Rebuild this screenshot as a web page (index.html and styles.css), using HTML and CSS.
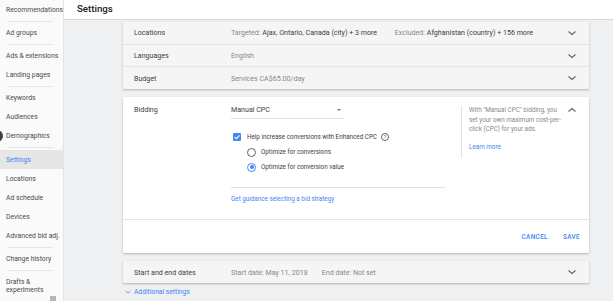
FILE: index.html
```html
<!DOCTYPE html>
<html lang="en">
<head>
    <meta charset="UTF-8">
    <title>Settings</title>
    <link rel="stylesheet" href="styles.css">
</head>
<body>
    <div class="sidebar">
        <div class="navItem">Recommendations</div>
        <div class="navLine"></div>
        <div class="navItem">Ad groups</div>
        <div class="navLine"></div>
        <div class="navItem">Ads &amp; extensions</div>
        <div class="navItem">Landing pages</div>
        <div class="navLine"></div>
        <div class="navItem">Keywords</div>
        <div class="navItem">Audiences</div>
        <div class="navItem">Demographics</div>
        <div class="navLine"></div>
        <div class="navItem active">Settings</div>
        <div class="navItem">Locations</div>
        <div class="navItem">Ad schedule</div>
        <div class="navItem">Devices</div>
        <div class="navItem">Advanced bid adj.</div>
        <div class="navLine"></div>
        <div class="navItem">Change history</div>
        <div class="navLine"></div>
        <div class="navItem">Drafts &amp;<br>experiments</div>
        <div class="scrollThumb"></div>
    </div>
    <div class="fab"></div>
    <div class="main">
        <div class="header">Settings</div>
        <div class="content">
            <div class="card collapsed">
                <div class="row">
                    <div class="label">Locations</div>
                    <div class="value">
                        <span class="targeted"><span class="muted">Targeted:</span> Ajax, Ontario, Canada (city) + 3 more</span>
                        <span><span class="muted">Excluded:</span> Afghanistan (country) + 156 more</span>
                    </div>
                    <svg class="chev" viewBox="0 0 12 8"><path d="M2.5 2.5 L6 5.5 L9.5 2.5"/></svg>
                </div>
                <div class="row">
                    <div class="label">Languages</div>
                    <div class="value muted">English</div>
                    <svg class="chev" viewBox="0 0 12 8"><path d="M2.5 2.5 L6 5.5 L9.5 2.5"/></svg>
                </div>
                <div class="row">
                    <div class="label">Budget</div>
                    <div class="value muted">Services CA$65.00/day</div>
                    <svg class="chev" viewBox="0 0 12 8"><path d="M2.5 2.5 L6 5.5 L9.5 2.5"/></svg>
                </div>
            </div>

            <div class="card open">
                <div class="bidBody">
                    <div class="label bidLabel">Bidding</div>
                    <div class="bidMain">
                        <div class="select">
                            <span>Manual CPC</span>
                            <span class="caret"></span>
                        </div>
                        <div class="checkRow">
                            <span class="checkbox">
                                <svg viewBox="0 0 8 8"><path d="M1.6 4.1 L3.3 5.7 L6.5 2.3"/></svg>
                            </span>
                            <span>Help increase conversions with Enhanced CPC</span>
                            <span class="help">?</span>
                        </div>
                        <div class="radios">
                            <div class="radioRow"><span class="radio"></span>Optimize for conversions</div>
                            <div class="radioRow"><span class="radio on"></span>Optimize for conversion value</div>
                        </div>
                        <div class="sep"></div>
                        <div class="link">Get guidance selecting a bid strategy</div>
                    </div>
                    <div class="aside">
                        <p>With "Manual CPC" bidding, you<br>set your own maximum cost-per-<br>click (CPC) for your ads.</p>
                        <div class="link small">Learn more</div>
                    </div>
                    <svg class="chev up" viewBox="0 0 12 8"><path d="M2.5 5.5 L6 2.5 L9.5 5.5"/></svg>
                </div>
                <div class="footer">
                    <span class="btnText">CANCEL</span>
                    <span class="btnText">SAVE</span>
                </div>
            </div>

            <div class="card collapsed">
                <div class="row">
                    <div class="label">Start and end dates</div>
                    <div class="value muted">
                        <span class="startDate">Start date: May 11, 2018</span>
                        <span>End date: Not set</span>
                    </div>
                    <svg class="chev" viewBox="0 0 12 8"><path d="M2.5 2.5 L6 5.5 L9.5 2.5"/></svg>
                </div>
            </div>

            <div class="more">
                <svg class="moreChev" viewBox="0 0 12 8"><path d="M2.5 2.5 L6 5.5 L9.5 2.5"/></svg>
                <span>Additional settings</span>
            </div>
        </div>
    </div>
</body>
</html>
```

FILE: styles.css
```css
html, body{
    margin:0;
    padding:0;
    width:613px;
    height:301px;
    overflow:hidden;
}
body{
    display:flex;
    font-family:Roboto, "Liberation Sans", sans-serif;
    color:#3c4043;
    background:#eef0f1;
    position:relative;
}
/* sidebar */
.sidebar{
    width:64px;
    flex:none;
    height:301px;
    box-sizing:border-box;
    background:#fafafa;
    border-right:1px solid #e3e3e3;
    position:relative;
    font-size:6.8px;
}
.navItem{
    padding:5.5px 0 5.5px 6px;
    line-height:8px;
    white-space:nowrap;
    color:#4a4a4a;
}
.navItem.active{
    background:#e6e6e6;
    color:#4285f4;
}
.navLine{
    height:1px;
    background:#e4e4e4;
    margin:1.5px 10px 1.8px 8px;
}
.scrollThumb{
    position:absolute;
    left:50px;
    bottom:0;
    width:6px;
    height:5px;
    background:#b5b5b5;
}
.fab{
    position:absolute;
    left:-9px;
    top:130px;
    width:12px;
    height:12px;
    border-radius:50%;
    background:#3c4043;
}
/* main */
.main{
    flex:1;
    display:flex;
    flex-direction:column;
}
.header{
    height:20px;
    box-sizing:border-box;
    background:white;
    border-bottom:1px solid #d6d6d6;
    padding-left:13px;
    line-height:18px;
    font-size:9.7px;
    font-weight:500;
    color:#202124;
}
.content{
    padding-left:59px;
    padding-top:2px;
    width:466px;
}
.card{
    width:466px;
    box-shadow:0 1px 2px rgba(0,0,0,.25);
    margin-bottom:8px;
}
.collapsed{
    background:#f5f5f5;
}
.open{
    background:white;
}
.row{
    display:flex;
    align-items:center;
    height:22.7px;
    padding:0 11px;
    border-bottom:1px solid #e6e6e6;
    font-size:7.1px;
    box-sizing:border-box;
}
.row:last-child{
    border-bottom:none;
    height:22px;
}
.label{
    width:97px;
    flex:none;
    color:#3c4043;
}
.value{
    flex:1;
    white-space:nowrap;
    color:#3c4043;
}
.muted{
    color:#888;
}
.targeted{
    display:inline-block;
    width:162px;
}
.startDate{
    display:inline-block;
    width:89px;
}
.chev{
    width:12px;
    height:8px;
    flex:none;
    fill:none;
    stroke:#5f6368;
    stroke-width:1.1;
}
/* bidding card */
.bidBody{
    display:flex;
    align-items:flex-start;
    padding:8px 11px 15px 11px;
    font-size:6.3px;
}
.bidLabel{
    font-size:7.1px;
    line-height:10px;
}
.bidMain{
    flex:1;
    padding-right:16px;
}
.select{
    width:113px;
    display:flex;
    justify-content:space-between;
    align-items:center;
    line-height:10px;
    padding-bottom:3px;
    border-bottom:1px solid #e0e0e0;
    font-size:7.1px;
    color:#3c4043;
}
.caret{
    width:0;
    height:0;
    border-left:2.5px solid transparent;
    border-right:2.5px solid transparent;
    border-top:2.5px solid #757575;
    margin-right:3px;
}
.checkRow{
    display:flex;
    align-items:center;
    height:10px;
    margin-top:12.5px;
    padding-left:2px;
    color:#3c4043;
}
.checkbox{
    width:8px;
    height:8px;
    border-radius:1px;
    background:#4285f4;
    margin-right:6px;
    display:flex;
}
.checkbox svg{
    width:8px;
    height:8px;
    fill:none;
    stroke:white;
    stroke-width:1.1;
}
.help{
    width:6px;
    height:6px;
    border:0.8px solid #666;
    border-radius:50%;
    font-size:5px;
    line-height:6px;
    text-align:center;
    margin-left:4px;
    color:#555;
}
.radios{
    margin-top:3px;
    padding-left:16px;
}
.radioRow{
    display:flex;
    align-items:center;
    height:15px;
}
.radio{
    width:7px;
    height:7px;
    border:1px solid #5f6368;
    border-radius:50%;
    margin-right:5px;
    position:relative;
}
.radio.on{
    border-color:#4285f4;
}
.radio.on::after{
    content:"";
    position:absolute;
    left:1.5px;
    top:1.5px;
    width:4px;
    height:4px;
    border-radius:50%;
    background:#4285f4;
}
.sep{
    height:1px;
    background:#e0e0e0;
    margin-top:12px;
}
.link{
    color:#4285f4;
    line-height:10px;
    margin-top:6.5px;
}
.aside{
    width:100px;
    box-sizing:border-box;
    flex:none;
    margin-top:1px;
    border-left:1px solid #e3e3e3;
    padding:0 0 6.5px 7px;
    color:#888;
    font-size:6.3px;
    white-space:nowrap;
}
.aside p{
    margin:0;
    line-height:9.5px;
}
.aside .small{
    margin-top:7px;
}
.chev.up{
    margin-left:5px;
    margin-top:1px;
}
.footer{
    height:33px;
    border-top:1px solid #e6e6e6;
    display:flex;
    justify-content:flex-end;
    align-items:center;
    gap:15px;
    padding-right:9px;
}
.btnText{
    font-size:6.5px;
    font-weight:500;
    letter-spacing:0.3px;
    color:#4285f4;
}
.more{
    display:flex;
    align-items:center;
    margin-top:-4px;
    line-height:10px;
    font-size:6.7px;
    color:#4285f4;
}
.moreChev{
    width:8px;
    height:6px;
    fill:none;
    stroke:#5f6368;
    stroke-width:1;
    margin-left:1px;
    margin-right:2px;
}
```
